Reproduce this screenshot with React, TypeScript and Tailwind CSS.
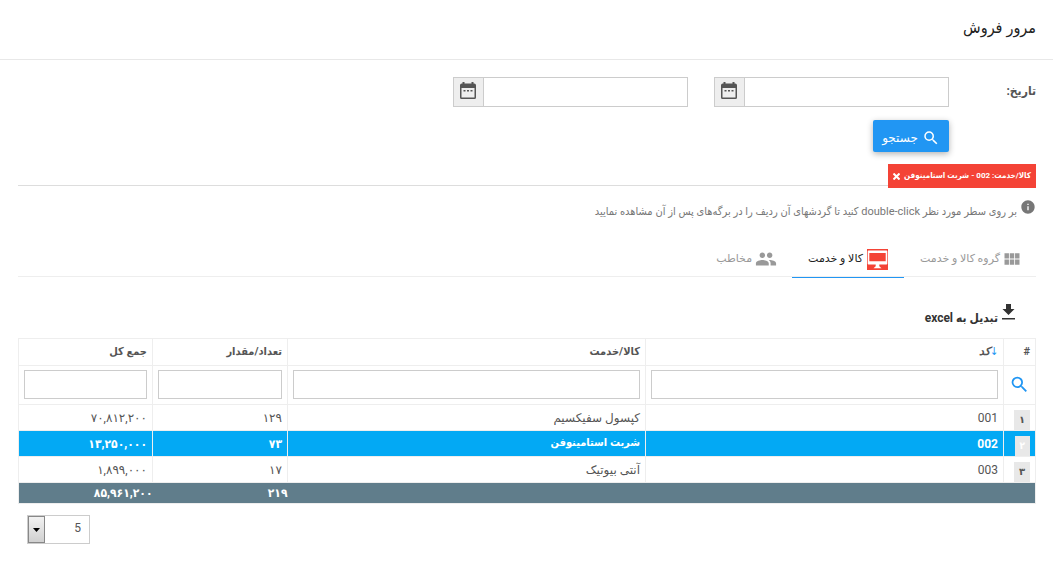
import * as React from "react";
import { MdInfo, MdPeople, MdSearch, MdViewModule } from "react-icons/md";
import clsx from "clsx";

type TabKey = "group" | "product" | "contact";
interface Row { code: string; title: string; count: string; total: string }

const ROWS: Row[] = [
  { code: "001", title: "کپسول سفیکسیم", count: "۱۲۹", total: "۷۰,۸۱۲,۲۰۰" },
  { code: "002", title: "شربت استامینوفن", count: "۷۳", total: "۱۳,۲۵۰,۰۰۰" },
  { code: "003", title: "آنتی بیوتیک", count: "۱۷", total: "۱,۸۹۹,۰۰۰" },
];
const INDEX = ["۱", "۲", "۳"];

const NARROW = "font-[Roboto,'DejaVu_Sans_Condensed','DejaVu_Sans',sans-serif]";

const TABS: { key: TabKey; label: string; icon: React.ReactNode }[] = [
  { key: "group", label: "گروه کالا و خدمت", icon: <MdViewModule size={20} className="-mx-0.5" /> },
  { key: "product", label: "کالا و خدمت", icon: <MonitorIcon /> },
  { key: "contact", label: "مخاطب", icon: <MdPeople size={22} className="-mx-px" /> },
];

function MonitorIcon() {
  return (
    <svg width="21" height="21" viewBox="0 0 21 21" aria-hidden="true">
      <rect width="21" height="21" fill="#f44336" />
      <path fillRule="evenodd" fill="#fff" d="M1.500 1.500h18a.8.8 0 0 1 .8.8v12.500a.8.8 0 0 1-.8.8h-7.200v1.600l2.200 2H6.500l2.200-2v-1.600H1.500a.8.8 0 0 1-.8-.8V2.300a.8.8 0 0 1 .8-.8zM2.300 4v8.300h16.400V4z" />
    </svg>
  );
}

function CalendarIcon() {
  return (
    <svg width="16" height="18" viewBox="0 0 16 18" fill="#555" aria-hidden="true">
      <path fillRule="evenodd" d="M2.500 0h2v1.500h7V0h2v1.500h.7A1.800 1.800 0 0 1 16 3.300V15.500A1.500 1.500 0 0 1 14.500 17h-13A1.500 1.500 0 0 1 0 15.500V3.300A1.800 1.800 0 0 1 1.800 1.500h.7zM1.500 6v9.500h13V6z" />
      <path d="M3.500 8h2v1.600h-2zM7 8h2v1.600H7zM10.500 8h2v1.600h-2z" />
    </svg>
  );
}

function DownloadIcon() {
  return (
    <svg width="13" height="16" viewBox="0 0 13 16" fill="#333" aria-hidden="true">
      <path d="M4 0h5v5h3.500l-6 6-6-6H4zM0 14h13v1.500H0z" />
    </svg>
  );
}

function DateField({ label }: { label: string }) {
  return (
    <div className="flex h-[30px] w-[235px] border border-[#ccc]">
      <input aria-label={label} className="min-w-0 flex-1 px-2 text-xs focus:outline-none" />
      <button type="button" aria-label={label} className="flex w-[30px] justify-center border-r border-[#ccc] bg-[#eee] pt-1 pr-px">
        <CalendarIcon />
      </button>
    </div>
  );
}

export default function App() {
  const [tab, setTab] = React.useState<TabKey>("product");
  const [filter, setFilter] = React.useState(true);
  const [selected, setSelected] = React.useState("002");
  const cell = "border border-[#eee] px-[5px]";

  return (
    <div dir="rtl" className="bg-white font-[Roboto,'DejaVu_Sans',sans-serif] text-xs text-[#555]">
      <header className="flex h-[60px] items-center border-b border-[#e8e8e8] px-[17px] pb-1">
        <h1 className={clsx(NARROW, "text-base text-[#222]")}>مرور فروش</h1>
      </header>

      <main className="pr-[17px] pl-[18px]">
        <form onSubmit={(e) => e.preventDefault()} className="flex pt-[17px]">
          <span className={clsx(NARROW, "w-[87px] pt-1.5 text-xs font-bold")}>تاریخ:</span>
          <div>
            <div className="flex flex-wrap gap-[26px]">
              <DateField label="از تاریخ" />
              <DateField label="تا تاریخ" />
            </div>
            <button type="submit" className="mt-[13px] flex h-8 w-[76px] items-center justify-center gap-1 rounded-xs bg-[#2196f3] pt-1 text-xs text-white shadow-[0_2px_6px_rgba(0,0,0,0.3)]">
              <MdSearch size={18} />
              <span>جستجو</span>
            </button>
          </div>
        </form>

        <div className="mt-3 flex h-6 items-end">
          {filter && (
            <span className={clsx(NARROW, "flex h-6 items-center gap-1 bg-[#f44336] px-[5px] text-[8px] font-bold text-white")}>
              کالا/خدمت: 002 - شربت استامینوفن
              <button type="button" onClick={() => setFilter(false)} aria-label="حذف">
                <svg width="7" height="7" viewBox="0 0 7 7" stroke="#fff" strokeWidth="2"><path d="M.5.5l6 6M6.500.5l-6 6" /></svg>
              </button>
            </span>
          )}
          <div className="mb-0.5 flex-1 border-b border-[#ddd]" />
        </div>

        <p className={clsx(NARROW, "mt-[11px] flex h-[25px] gap-[3px] text-[11px] text-[#777]")}>
          <MdInfo size={16} className="shrink-0" />
          <span className="pt-1.5">بر روی سطر مورد نظر double-click کنید تا گردشهای آن ردیف را در برگه‌های پس از آن مشاهده نمایید</span>
        </p>

        <div role="tablist" className="mt-[17px] flex h-9 border-b border-[#eee]">
          {TABS.map((t) => (
            <button
              key={t.key}
              type="button"
              role="tab"
              aria-selected={tab === t.key}
              onClick={() => setTab(t.key)}
              className={clsx("-mb-0.5 flex items-center gap-1 border-b px-4 text-[11px]", tab === t.key ? "border-[#2196f3] text-[#222]" : "border-transparent text-[#999]")}
            >
              {t.icon}
              {t.label}
            </button>
          ))}
        </div>

        <button type="button" className={clsx(NARROW, "mt-[27px] mr-[21px] flex h-5 items-start gap-1 text-xs font-bold text-[#333]")}>
          <DownloadIcon />
          <span className="pt-1.5">تبدیل به excel</span>
        </button>

        <table className="mt-3.5 w-full table-fixed border-collapse text-right">
          <colgroup>
            <col className="w-8" />
            <col />
            <col />
            <col className="w-[135px]" />
            <col className="w-[134px]" />
          </colgroup>
          <thead className={clsx(NARROW, "text-[11px]")}>
            <tr className="h-[27px]">
              <th className={cell}>#</th>
              <th className={cell}><span className="font-normal text-[#2196f3]">↓</span><i>کد</i></th>
              <th className={cell}>کالا/خدمت</th>
              <th className={cell}>تعداد/مقدار</th>
              <th className={cell}>جمع کل</th>
            </tr>
            <tr className="h-[39px]">
              <td className={clsx(cell, "pb-0.5")}>
                <button type="button" aria-label="جستجو" className="block text-[#2196f3]"><MdSearch size={21} /></button>
              </td>
              {["کد", "کالا/خدمت", "تعداد/مقدار", "جمع کل"].map((name) => (
                <td key={name} className={clsx(cell, "pb-0.5")}>
                  <input aria-label={name} className="block h-[29px] w-full border border-[#ccc] px-1.5" />
                </td>
              ))}
            </tr>
          </thead>
          <tbody>
            {ROWS.map((r, i) => (
              <tr
                key={r.code}
                onClick={() => setSelected(r.code)}
                className={clsx("h-[26px]", selected === r.code && [NARROW, "bg-[#03a9f4] font-bold text-white"])}
              >
                <td className={cell}>
                  <span className="mt-1 block w-fit bg-[#e8e8e8] px-[5px] text-[10px] leading-5 font-bold">{INDEX[i]}</span>
                </td>
                <td className={cell}>{r.code}</td>
                <td className={clsx(cell, selected === r.code && "text-[11px]")}>{r.title}</td>
                <td className={cell}>{r.count}</td>
                <td className={cell}>{r.total}</td>
              </tr>
            ))}
          </tbody>
          <tfoot className={NARROW}>
            <tr className="h-[21px] border border-[#eee] bg-[#607d8b] font-bold text-white">
              <td colSpan={3} />
              <td>۲۱۹</td>
              <td>۸۵,۹۶۱,۲۰۰</td>
            </tr>
          </tfoot>
        </table>

        <div className="mt-[11px] flex justify-end pl-[9px]">
          <div className="relative">
            <select aria-label="تعداد ردیف" defaultValue="5" className="block h-[29px] w-[63px] appearance-none border border-[#ccc] bg-white pr-2 pb-1">
              <option>5</option>
              <option>10</option>
              <option>20</option>
            </select>
            <span className="pointer-events-none absolute inset-y-px left-px flex w-[17px] items-center justify-center border border-[#888] bg-linear-to-b from-[#f2f2f2] to-[#d0d0d0]">
              <svg width="7" height="4" viewBox="0 0 7 4"><path d="M0 0h7L3.500 4z" /></svg>
            </span>
          </div>
        </div>
      </main>
    </div>
  );
}
